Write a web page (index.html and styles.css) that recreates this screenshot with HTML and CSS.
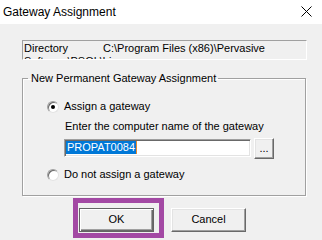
FILE: index.html
```html
<!DOCTYPE html>
<html lang="en">
<head>
  <meta charset="UTF-8" />
  <title>Gateway Assignment</title>
  <link rel="stylesheet" href="styles.css">
</head>
<body>

<div class="titlebar">
  <span class="title">Gateway Assignment</span>
  <svg class="close" width="11" height="11" viewBox="0 0 11 11">
    <path d="M0.5 0.5 L10.5 10.5 M10.5 0.5 L0.5 10.5" stroke="#000" stroke-width="1" fill="none" />
  </svg>
</div>

<div class="dialog">
  <div class="dirbox">
    <span class="dirlabel">Directory</span>C:\Program Files (x86)\Pervasive Software\PSQL\bin
  </div>

  <fieldset class="group">
    <legend>New Permanent Gateway Assignment</legend>

    <div class="option first">
      <span class="radio checked"></span>
      <span>Assign a gateway</span>
    </div>

    <div class="hint">Enter the computer name of the gateway</div>

    <div class="namerow">
      <div class="textbox"><span class="sel">PROPAT0084</span></div>
      <div class="browse">...</div>
    </div>

    <div class="option second">
      <span class="radio"></span>
      <span>Do not assign a gateway</span>
    </div>
  </fieldset>

  <div class="buttons">
    <div class="mark">
      <div class="btn default">OK</div>
    </div>
    <div class="btn">Cancel</div>
  </div>
</div>

</body>
</html>
```

FILE: styles.css
```css
html, body {
  margin: 0;
  padding: 0;
}
body {
  width: 322px;
  height: 240px;
  overflow: hidden;
  background: #f0f0f0;
  font-family: "Liberation Sans", Arial, sans-serif;
  font-size: 11px;
  line-height: 13px;
  color: #000;
}
.titlebar {
  height: 24px;
  background: #fff;
  display: flex;
  align-items: center;
  justify-content: space-between;
  padding: 0 10px 0 3px;
}
.title {
  font-size: 12px;
  line-height: 16px;
}
.close {
  display: block;
  margin-top: -1px;
}
.dialog {
  padding: 16px 0 0 22px;
}
.dirbox {
  box-sizing: border-box;
  width: 285px;
  height: 20px;
  padding: 1px 0 0 1px;
  overflow: hidden;
  border: 1px solid;
  border-color: #a0a0a0 #fff #fff #a0a0a0;
}
.dirlabel {
  display: inline-block;
  width: 79px;
}
.group {
  box-sizing: border-box;
  width: 284px;
  height: 124px;
  margin: 12px 0 0 0;
  padding: 0;
  min-width: 0;
  border: 1px solid #a0a0a0;
  box-shadow: 1px 1px 0 #fff, inset 1px 1px 0 #fff;
}
.group legend {
  margin-left: 5px;
  padding: 0 2px 0 3px;
  line-height: 13px;
}
.option {
  display: flex;
  align-items: center;
  gap: 5px;
  height: 13px;
  padding-left: 24px;
}
.option.first {
  margin-top: 15px;
}
.option.second {
  margin-top: 9px;
}
.radio {
  box-sizing: border-box;
  width: 12px;
  height: 12px;
  border-radius: 50%;
  background: #fff;
  border: 1px solid;
  border-color: #a0a0a0 #e3e3e3 #e3e3e3 #a0a0a0;
  box-shadow: inset 1px 1px 0 #696969;
  display: flex;
  align-items: center;
  justify-content: center;
}
.radio.checked::after {
  content: "";
  width: 4px;
  height: 4px;
  border-radius: 50%;
  background: #000;
}
.hint {
  margin-top: 7px;
  padding-left: 42px;
}
.namerow {
  display: flex;
  align-items: flex-start;
  gap: 3px;
  margin-top: 5px;
  padding-left: 41px;
}
.textbox {
  box-sizing: border-box;
  width: 187px;
  height: 18px;
  margin-top: 1px;
  padding: 1px 0 0 1px;
  background: #fff;
  border: 1px solid;
  border-color: #a0a0a0 #fff #fff #a0a0a0;
  box-shadow: inset 1px 1px 0 #696969, inset -1px -1px 0 #e3e3e3;
}
.sel {
  display: inline-block;
  padding: 0 1px;
  background: #0078d7;
  color: #fff;
  border-right: 1px solid #e88a2c;
}
.browse {
  box-sizing: border-box;
  width: 20px;
  height: 21px;
  line-height: 19px;
  text-align: center;
  border: 1px solid;
  border-color: #fff #696969 #696969 #fff;
  box-shadow: inset -1px -1px 0 #a0a0a0, inset 1px 1px 0 #e3e3e3;
}
.buttons {
  display: flex;
  align-items: flex-start;
  gap: 7px;
  margin: 2px 0 0 51px;
}
.mark {
  border: 5px solid #a349a4;
  padding: 5px 0 1px 1px;
  width: 80px;
}
.btn {
  box-sizing: border-box;
  width: 75px;
  height: 24px;
  line-height: 21px;
  text-align: center;
  border: 1px solid;
  border-color: #fff #696969 #696969 #fff;
  box-shadow: inset -1px -1px 0 #a0a0a0, inset 1px 1px 0 #e3e3e3;
}
.buttons > .btn {
  margin-top: 10px;
}
.btn.default {
  border: 1px solid #646464;
  box-shadow: inset 1px 1px 0 #fff, inset -1px -1px 0 #696969, inset -2px -2px 0 #a0a0a0;
}
```
